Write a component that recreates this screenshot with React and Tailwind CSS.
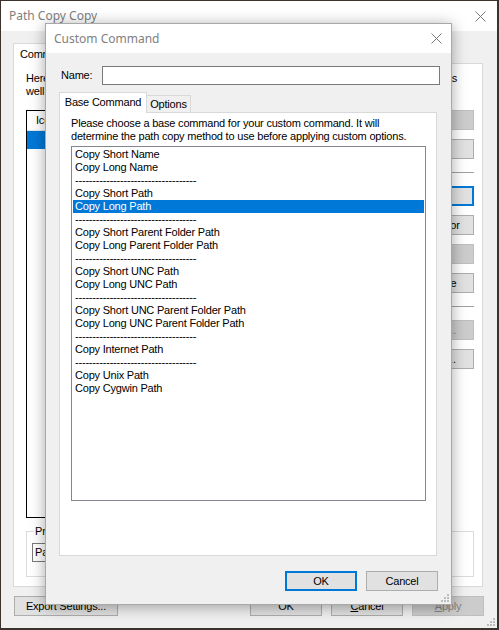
const items = [
  "Copy Short Name",
  "Copy Long Name",
  null,
  "Copy Short Path",
  "Copy Long Path",
  null,
  "Copy Short Parent Folder Path",
  "Copy Long Parent Folder Path",
  null,
  "Copy Short UNC Path",
  "Copy Long UNC Path",
  null,
  "Copy Short UNC Parent Folder Path",
  "Copy Long UNC Parent Folder Path",
  null,
  "Copy Internet Path",
  null,
  "Copy Unix Path",
  "Copy Cygwin Path",
];

const DASHES = "-----------------------------------";

function CloseX() {
  return (
    <svg width="11" height="11" viewBox="0 0 11 11" className="shrink-0">
      <path d="M0.5 0.5L10.5 10.5M10.5 0.5L0.5 10.5" stroke="#7a7a7a" strokeWidth="1" fill="none" />
    </svg>
  );
}

function Grip() {
  return (
    <svg width="9" height="9" viewBox="0 0 9 9">
      <g fill="#bdbdbd">
        <rect x="6" y="0" width="2" height="2" />
        <rect x="3" y="3" width="2" height="2" />
        <rect x="6" y="3" width="2" height="2" />
        <rect x="0" y="6" width="2" height="2" />
        <rect x="3" y="6" width="2" height="2" />
        <rect x="6" y="6" width="2" height="2" />
      </g>
    </svg>
  );
}

function Btn({ children, w = "w-[73px]", variant = "normal", className = "" }) {
  const styles = {
    normal: "bg-[#e1e1e1] border border-[#adadad] text-black",
    focus: "bg-[#e1e1e1] border-2 border-[#0078d7] text-black",
    disabled: "bg-[#cccccc] border border-[#bfbfbf] text-[#838383]",
  };
  return (
    <div className={`h-[20px] ${w} flex items-center justify-center ${styles[variant]} ${className}`}>
      {children}
    </div>
  );
}

function Sep() {
  return <div className="h-px bg-[#a0a0a0] my-[4px]" />;
}

function CustomCommandDialog() {
  return (
    <div className="absolute z-20 left-[45px] top-[23px] w-[407px] h-[582px] flex flex-col bg-[#f0f0f0] border border-[#a8a8a8] shadow-[0_2px_14px_rgba(0,0,0,0.35)]">
      <div className="h-[29px] bg-white flex items-center justify-between pl-[8px] pr-[9px]">
        <span className="font-['Noto_Sans',sans-serif] text-[12px] tracking-normal text-[#808080]">Custom Command</span>
        <CloseX />
      </div>

      <div className="flex items-center pl-[15px] mt-[13px]">
        <span className="w-[41px]">Name:</span>
        <div className="w-[338px] h-[19px] bg-white border border-[#7a7a7a]" />
      </div>

      <div className="flex items-end pl-[13px] mt-[7px] relative z-10">
        <div className="h-[21px] w-[88px] -mb-px bg-white border border-b-0 border-[#d9d9d9] flex items-center justify-center pb-[2px]">
          Base Command
        </div>
        <div className="h-[17px] w-[44px] bg-[#f0f0f0] border border-l-0 border-b-0 border-[#d9d9d9] flex items-center justify-center">
          Options
        </div>
      </div>

      <div className="ml-[13px] w-[378px] h-[444px] bg-white border border-[#d9d9d9] pl-[11px] pt-[4px]">
        <p className="leading-[13px]">
          Please choose a base command for your custom command. It will
          <br />
          determine the path copy method to use before applying custom options.
        </p>
        <div className="mt-[3px] w-[355px] h-[355px] border border-[#828790] p-px">
          {items.map((it, i) =>
            it === null ? (
              <div key={i} className="h-[13px] leading-[13px] pl-[2px] whitespace-nowrap">
                {DASHES}
              </div>
            ) : (
              <div
                key={i}
                className={`h-[13px] leading-[13px] pl-[2px] whitespace-nowrap ${
                  it === "Copy Long Path" ? "bg-[#0078d7] text-white" : ""
                }`}
              >
                {it}
              </div>
            )
          )}
        </div>
      </div>

      <div className="flex justify-end gap-[9px] pr-[13px] mt-[15px]">
        <Btn w="w-[72px]" variant="focus">OK</Btn>
        <Btn w="w-[72px]">Cancel</Btn>
      </div>
      <div className="flex justify-end pr-px mt-auto mb-px">
        <Grip />
      </div>
    </div>
  );
}

export default function App() {
  return (
    <div className="relative w-[499px] h-[630px] bg-[#3c322d] pt-px pl-px pr-[2px] pb-[2px] font-['Liberation_Sans',Arial,sans-serif] text-[11px] tracking-[-0.2px] text-black">
      <div className="h-full flex flex-col bg-[#f0f0f0]">
        <div className="h-[30px] shrink-0 bg-white flex items-center justify-between pl-[8px] pr-[11px]">
          <span className="font-['Noto_Sans',sans-serif] text-[12px] tracking-normal text-[#808080]">Path Copy Copy</span>
          <CloseX />
        </div>

        <div className="flex flex-col pl-[12px] pt-[12px]">
          <div className="flex relative z-10">
            <div className="h-[21px] -mb-px px-[6px] bg-white border border-b-0 border-[#d9d9d9] flex items-center">
              Commands
            </div>
          </div>

          <div className="w-[470px] h-[524px] bg-white border border-[#d9d9d9] pl-[12px] pt-[8px] flex flex-col">
            <div className="w-[431px] flex justify-between leading-[13px]">
              <span>Here</span>
              <span>as</span>
            </div>
            <div className="leading-[13px]">well</div>

            <div className="flex gap-[8px] mt-[12px]">
              <div className="w-[365px] h-[408px] border border-black flex flex-col">
                <div className="h-[20px] flex items-center border-b border-[#e5e5e5]">
                  <span className="pl-[9px] w-[60px] border-r border-[#e5e5e5]">Icon</span>
                </div>
                <div className="h-[18px] bg-[#0078d7]" />
              </div>
              <div className="w-[75px] flex flex-col gap-[9px]">
                <Btn w="w-[75px]" variant="disabled">Up</Btn>
                <Btn w="w-[75px]">Down</Btn>
                <Sep />
                <Btn w="w-[75px]" variant="focus">Add...</Btn>
                <Btn w="w-[75px]">Separator</Btn>
                <Btn w="w-[75px]" variant="disabled">Edit...</Btn>
                <Btn w="w-[75px]">Remove</Btn>
                <Sep />
                <Btn w="w-[75px]" variant="disabled">Export...</Btn>
                <Btn w="w-[75px]">Import...</Btn>
              </div>
            </div>

            <div className="mt-[13px] w-[448px] h-[46px] border border-[#dcdcdc] relative pl-[5px] pt-[11px]">
              <span className="absolute left-[7px] -top-[7px] bg-white px-px leading-[13px]">Preview</span>
              <div className="w-[200px] h-[19px] border border-[#7a7a7a] flex items-center pl-[2px]">
                Path
              </div>
            </div>
          </div>

          <div className="flex mt-[9px] pl-px">
            <Btn w="w-[104px]">Export Settings...</Btn>
            <div className="flex gap-[9px] ml-[132px]">
              <Btn w="w-[72px]">OK</Btn>
              <Btn w="w-[72px]"><span><u>C</u>ancel</span></Btn>
              <Btn w="w-[72px]" variant="disabled"><span><u>A</u>pply</span></Btn>
            </div>
          </div>
        </div>
        <div className="flex justify-end mt-auto pr-px pb-px">
          <Grip />
        </div>
      </div>

      <CustomCommandDialog />
    </div>
  );
}
